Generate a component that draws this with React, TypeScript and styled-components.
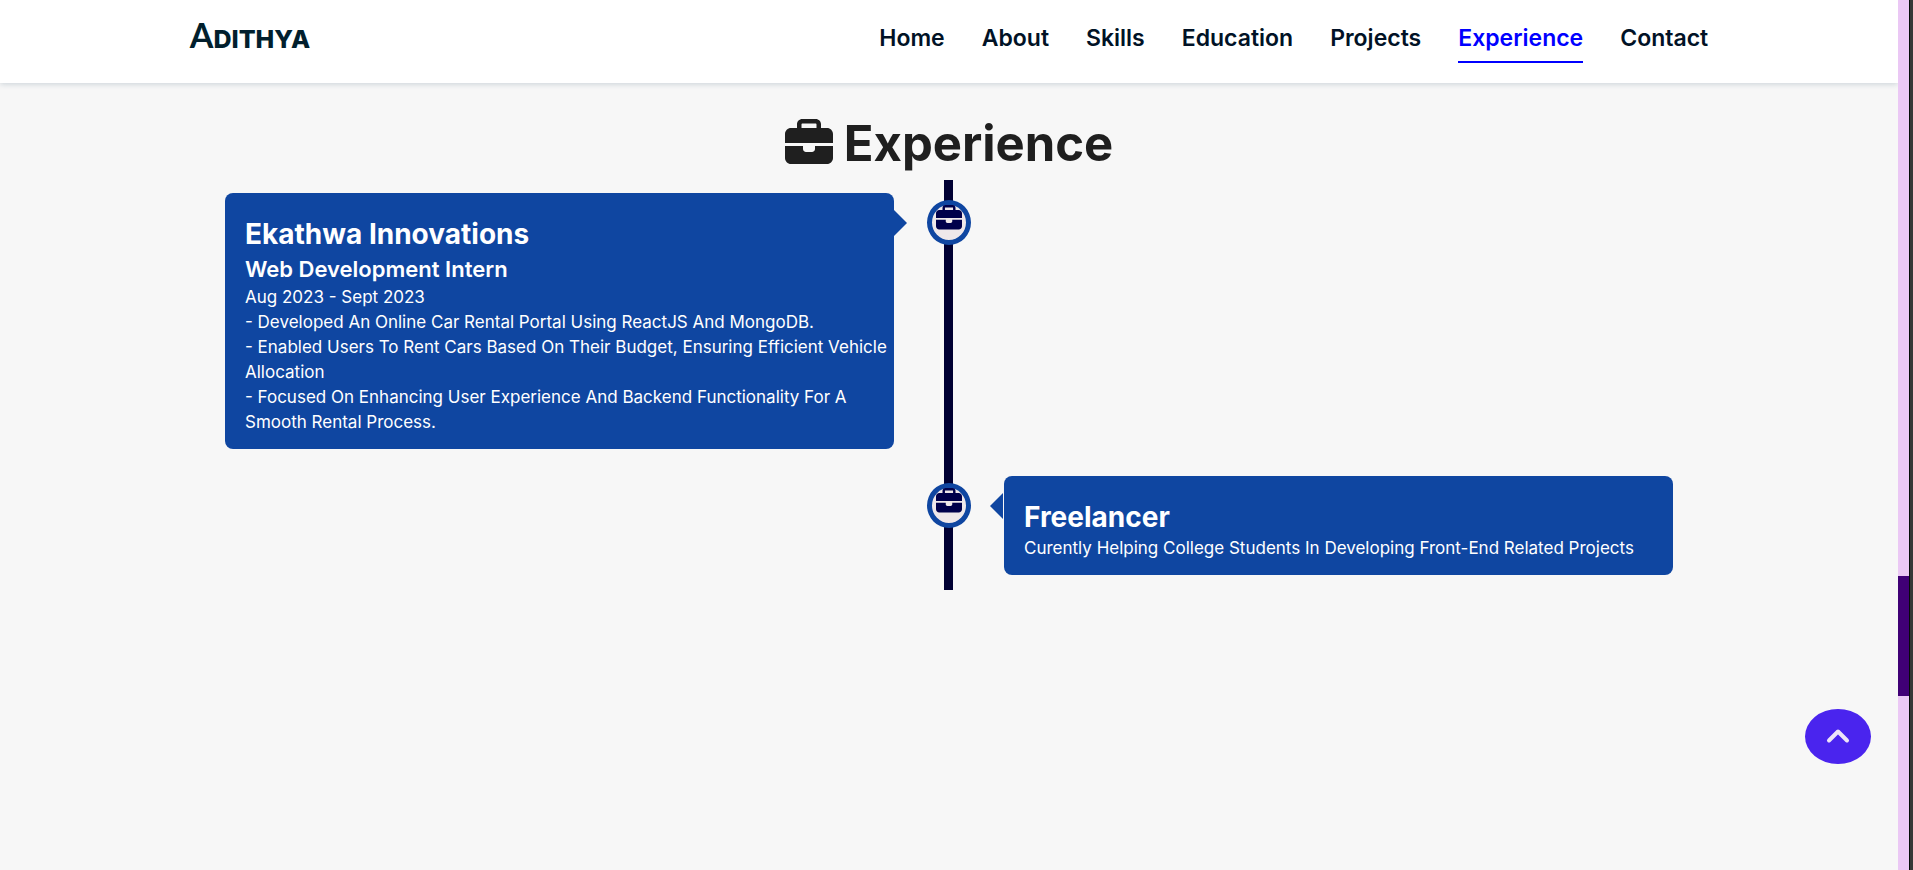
import React from "react";
import styled, { createGlobalStyle, css } from "styled-components";
import { FaBriefcase } from "react-icons/fa6";

const colors = {
  ink: "#011226",
  logo: "#021f2d",
  active: "#0000ff",
  page: "#f7f7f7",
  card: "#0f46a1",
  line: "#000033",
  marker: "#efe8ea",
  markerIcon: "#00004b",
  button: "#4a24ee",
};

const GlobalStyle = createGlobalStyle`
  *, *::before, *::after { box-sizing: border-box; }
  body {
    margin: 0;
    background: ${colors.page};
    font-family: Inter, "Open Sans", sans-serif;
  }
  h1, h2, h3, p, ul { margin: 0; padding: 0; }
`;

const Window = styled.div`
  display: grid;
  grid-template-columns: minmax(0, 1fr) 11px 4px;
  min-height: 100vh;
`;

const Page = styled.div`
  background: ${colors.page};
`;

const Header = styled.header`
  display: flex;
  align-items: center;
  justify-content: space-between;
  min-height: 83px;
  padding: 0 10%;
  background: #fff;
  box-shadow: 0 1px 6px rgba(20, 60, 90, 0.2);
`;

const Logo = styled.a`
  padding-bottom: 10px;
  color: ${colors.logo};
  font-size: 25px;
  font-weight: 800;
  line-height: 40px;
  text-decoration: none;
`;

const LogoInitial = styled.span`
  font-family: Lato, sans-serif;
  font-size: 34px;
  font-weight: 700;
`;

const NavList = styled.ul`
  display: flex;
  gap: 37px;
  list-style: none;
`;

const NavLink = styled.a<{ $active?: boolean }>`
  display: block;
  padding-bottom: 5px;
  border-bottom: 2px solid ${(p) => (p.$active ? colors.active : "transparent")};
  color: ${(p) => (p.$active ? colors.active : colors.ink)};
  font-size: 23px;
  font-weight: 600;
  line-height: 36px;
  text-decoration: none;
`;

const Section = styled.main`
  padding: 25px 24px 24px;
`;

const Heading = styled.h1`
  color: #1f1f1f;
  font-size: 49px;
  font-weight: 700;
  line-height: 72px;
  text-align: center;

  svg {
    width: 48px;
    height: 48px;
    margin-right: 11px;
    vertical-align: -6px;
  }
`;

const Timeline = styled.div`
  position: relative;
  display: grid;
  row-gap: 27px;
  max-width: 1448px;
  margin: 0 auto;
  padding: 13px 0 15px;

  &::before {
    content: "";
    position: absolute;
    top: 0;
    bottom: 0;
    left: calc(50% - 5px);
    width: 9px;
    background: ${colors.line};
  }
`;

const Entry = styled.article`
  display: grid;
  grid-template-columns: minmax(0, 1fr) 110px minmax(0, 1fr);
  align-items: start;
`;

const Marker = styled.span`
  z-index: 1;
  display: flex;
  grid-row: 1;
  grid-column: 2;
  justify-content: center;
  justify-self: center;
  width: 44px;
  height: 45px;
  margin-top: 7px;
  border: 5px solid ${colors.card};
  border-radius: 50%;
  background: ${colors.marker};
  color: ${colors.markerIcon};

  svg {
    flex: none;
    width: 26px;
    height: 26px;
  }
`;

const leftArrow = css`
  right: 100%;
  margin-right: 1px;
  border-right-color: ${colors.card};
  border-left-width: 0;
`;

const rightArrow = css`
  left: 100%;
  border-left-color: ${colors.card};
  border-right-width: 0;
`;

const Card = styled.div<{ $side: "left" | "right" }>`
  position: relative;
  grid-row: 1;
  grid-column: ${(p) => (p.$side === "left" ? 1 : 3)};
  padding: 23px 4px 14px 20px;
  border-radius: 8px;
  background: ${colors.card};
  color: #fff;

  &::after {
    content: "";
    position: absolute;
    top: 17px;
    border: 13px solid transparent;
    ${(p) => (p.$side === "left" ? rightArrow : leftArrow)}
  }
`;

const Company = styled.h2`
  font-size: 28px;
  font-weight: 700;
  line-height: 37px;
`;

const Role = styled.h3`
  font-size: 22px;
  font-weight: 600;
  line-height: 32px;
`;

const Text = styled.p`
  font-size: 17px;
  line-height: 25px;
`;

const TopButton = styled.button`
  position: fixed;
  right: 42px;
  bottom: 106px;
  display: flex;
  align-items: center;
  justify-content: center;
  width: 66px;
  height: 55px;
  padding: 0 0 2px;
  border: 0;
  border-radius: 50%;
  background: ${colors.button};
  color: #eee4f8;
  cursor: pointer;
`;

const ScrollTrack = styled.div`
  position: sticky;
  top: 0;
  display: grid;
  grid-template-rows: 576fr 120fr 174fr;
  height: 100vh;
  background: #ebc8f5;
`;

const ScrollThumb = styled.div`
  grid-row: 2;
  background: #400076;
`;

const WindowEdge = styled.div`
  border-left: 1px solid #050d08;
  background: #373737;
`;

const links = ["Home", "About", "Skills", "Education", "Projects", "Experience", "Contact"];

interface Job {
  company: string;
  role?: string;
  lines: string[];
}

const jobs: Job[] = [
  {
    company: "Ekathwa Innovations",
    role: "Web Development Intern",
    lines: [
      "Aug 2023 - Sept 2023",
      "- Developed An Online Car Rental Portal Using ReactJS And MongoDB.",
      "- Enabled Users To Rent Cars Based On Their Budget, Ensuring Efficient Vehicle Allocation",
      "- Focused On Enhancing User Experience And Backend Functionality For A Smooth Rental Process.",
    ],
  },
  {
    company: "Freelancer",
    lines: ["Curently Helping College Students In Developing Front-End Related Projects"],
  },
];

export default function App() {
  return (
    <Window>
      <GlobalStyle />
      <Page>
        <Header>
          <Logo href="#home">
            <LogoInitial>A</LogoInitial>DITHYA
          </Logo>
          <nav>
            <NavList>
              {links.map((label) => (
                <li key={label}>
                  <NavLink href={`#${label.toLowerCase()}`} $active={label === "Experience"}>
                    {label}
                  </NavLink>
                </li>
              ))}
            </NavList>
          </nav>
        </Header>
        <Section id="experience">
          <Heading>
            <FaBriefcase aria-hidden />
            Experience
          </Heading>
          <Timeline>
            {jobs.map((job, i) => (
              <Entry key={job.company}>
                <Card $side={i % 2 === 0 ? "left" : "right"}>
                  <Company>{job.company}</Company>
                  {job.role && <Role>{job.role}</Role>}
                  {job.lines.map((line) => (
                    <Text key={line}>{line}</Text>
                  ))}
                </Card>
                <Marker>
                  <FaBriefcase aria-hidden />
                </Marker>
              </Entry>
            ))}
          </Timeline>
        </Section>
        <TopButton type="button" aria-label="Back to top">
          <svg width="24" height="16" viewBox="0 0 24 16" fill="none" aria-hidden>
            <path
              d="M3 12.5L12 3.5L21 12.5"
              stroke="currentColor"
              strokeWidth="4"
              strokeLinecap="round"
              strokeLinejoin="round"
            />
          </svg>
        </TopButton>
      </Page>
      <ScrollTrack aria-hidden>
        <ScrollThumb />
      </ScrollTrack>
      <WindowEdge />
    </Window>
  );
}
